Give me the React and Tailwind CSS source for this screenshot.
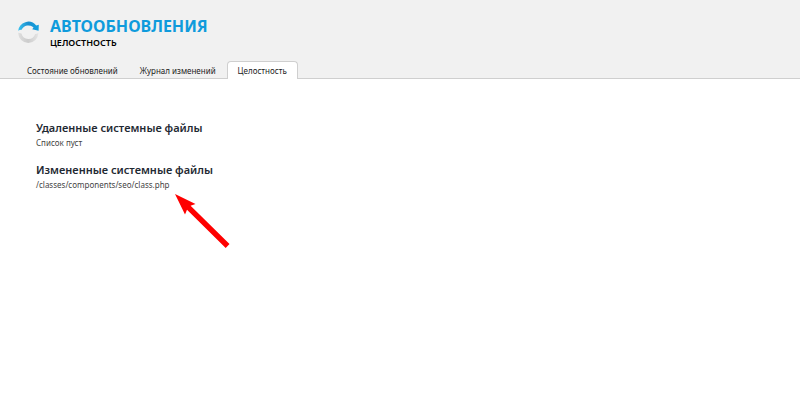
import React, { useState } from 'react'

const tabs = [
  { id: 'state', label: 'Состояние обновлений' },
  { id: 'log', label: 'Журнал изменений' },
  { id: 'integrity', label: 'Целостность' },
]

const sections = [
  { title: 'Удаленные системные файлы', text: 'Список пуст' },
  { title: 'Измененные системные файлы', text: '/classes/components/seo/class.php' },
]

function Logo() {
  return (
    <svg className="w-6 h-6 shrink-0" viewBox="0 0 24 24" fill="none" aria-hidden="true">
      <defs>
        <linearGradient id="top" x1="2" y1="10" x2="22" y2="10" gradientUnits="userSpaceOnUse">
          <stop offset="0" stopColor="#3cc4f0" />
          <stop offset="0.5" stopColor="#1b8fce" />
          <stop offset="1" stopColor="#12a0e0" />
        </linearGradient>
        <linearGradient id="bottom" x1="2" y1="16" x2="22" y2="16" gradientUnits="userSpaceOnUse">
          <stop offset="0" stopColor="#dedede" />
          <stop offset="0.5" stopColor="#cccccc" />
          <stop offset="1" stopColor="#e4e4e4" />
        </linearGradient>
      </defs>
      <path d="M2.2 10.8A10.2 10.2 0 0 1 20.2 5.4L22.8 4.8L22.6 10.8L16.2 9.2L17.6 7.6A7.4 7.4 0 0 0 5.6 9.8Q3.8 9.6 2.2 10.8Z" fill="url(#top)" />
      <path d="M2.2 12.8L5.4 13.6A7.2 7.2 0 0 0 19.2 14Q21 14.2 22.4 12.8A10.1 10.1 0 0 1 2.2 12.8Z" fill="url(#bottom)" />
    </svg>
  )
}

function App() {
  const [active, setActive] = useState('integrity')

  return (
    <div className="min-h-screen bg-white text-[#222] font-['Noto_Sans','Open_Sans',sans-serif]">
      {/* header */}
      <header className="bg-[#f1f1f1] border-b border-[#cfcfcf] pt-[15px]">
        <div className="flex items-center gap-2 pl-4">
          <Logo />
          <div className="pl-[2px]">
            <h1 className="text-[16px] leading-[22px] font-bold text-[#0f9bdc]">АВТООБНОВЛЕНИЯ</h1>
            <p className="text-[9px] leading-3 font-semibold text-black">ЦЕЛОСТНОСТЬ</p>
          </div>
        </div>

        {/* tabs */}
        <nav className="flex pl-4 pt-3 -mb-px">
          {tabs.map((tab) => (
            <button
              key={tab.id}
              type="button"
              onClick={() => setActive(tab.id)}
              className={
                active === tab.id
                  ? 'h-[18px] px-[10px] text-[8px] leading-4 rounded-t border border-b-0 border-[#cfcfcf] bg-white'
                  : 'h-[18px] px-[10px] text-[8px] leading-4 rounded-t border border-b-0 border-transparent'
              }
            >
              {tab.label}
            </button>
          ))}
        </nav>
      </header>

      {/* content */}
      <main className="relative flex flex-col gap-[14px] px-9 pt-[42px]">
        {sections.map((section) => (
          <section key={section.title}>
            <h2 className="text-[11px] leading-[14px] font-semibold text-[#1f2a33]">{section.title}</h2>
            <p className="text-[8px] leading-3 pt-[2px] text-[#444]">{section.text}</p>
          </section>
        ))}

        {/* pointer to the changed file */}
        <svg className="absolute left-[174px] top-[114px] w-14 h-14" viewBox="0 0 56 56" fill="#fe0000" aria-hidden="true">
          <path d="M1 1L21.5 11L16.6 12.8L55.5 51L51.7 55L13 16.8L11 21.5Z" />
        </svg>
      </main>
    </div>
  )
}

export default App
